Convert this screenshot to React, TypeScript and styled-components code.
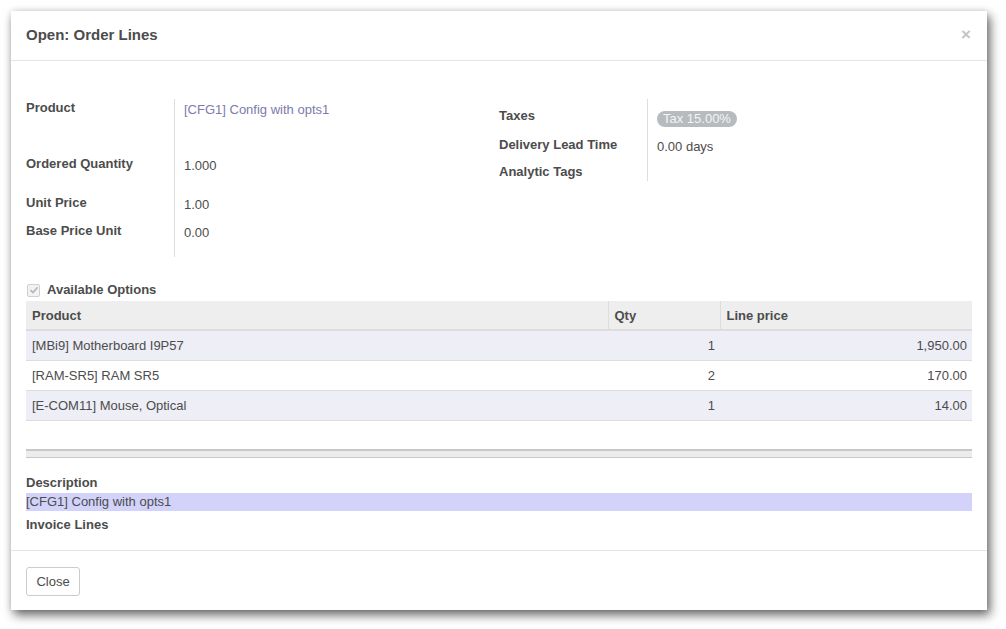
import styled, { createGlobalStyle } from "styled-components";

const GlobalStyle = createGlobalStyle`
  html, body {
    min-height: 100vh;
  }
  body {
    margin: 0;
    background: #fff;
    font-family: "Liberation Sans", Arial, sans-serif;
    font-size: 13px;
    color: #4c4c4c;
  }
`;

interface Line {
  product: string;
  qty: number;
  price: string;
}

const lines: Line[] = [
  { product: "[MBi9] Motherboard I9P57", qty: 1, price: "1,950.00" },
  { product: "[RAM-SR5] RAM SR5", qty: 2, price: "170.00" },
  { product: "[E-COM11] Mouse, Optical", qty: 1, price: "14.00" },
];

function App() {
  return (
    <>
      <GlobalStyle />
      <Dialog>
        <Header>
          <Title>Open: Order Lines</Title>
          <CloseX>×</CloseX>
        </Header>
        <Body>
          <Groups>
            <Group>
              <FieldRow $h={56}>
                <Label>Product</Label>
                <Value $pad={2}>
                  <Link>[CFG1] Config with opts1</Link>
                </Value>
              </FieldRow>
              <FieldRow $h={39}>
                <Label>Ordered Quantity</Label>
                <Value $pad={2}>1.000</Value>
              </FieldRow>
              <FieldRow $h={28}>
                <Label>Unit Price</Label>
                <Value $pad={2}>1.00</Value>
              </FieldRow>
              <FieldRow $h={35}>
                <Label>Base Price Unit</Label>
                <Value $pad={2}>0.00</Value>
              </FieldRow>
            </Group>
            <Group>
              <FieldRow $h={37}>
                <Label $pad={8}>Taxes</Label>
                <Value $pad={12}>
                  <Badge>Tax 15.00%</Badge>
                </Value>
              </FieldRow>
              <FieldRow $h={27}>
                <Label>Delivery Lead Time</Label>
                <Value $pad={2}>0.00 days</Value>
              </FieldRow>
              <FieldRow $h={18}>
                <Label>Analytic Tags</Label>
                <Value />
              </FieldRow>
            </Group>
          </Groups>

          <OptionsToggle>
            <CheckBox>
              <svg width="10" height="10" viewBox="0 0 10 10">
                <path d="M1.5 5.2 L4 7.6 L8.6 2.2" fill="none" stroke="#b5b5b5" strokeWidth="1.6" />
              </svg>
            </CheckBox>
            <span>Available Options</span>
          </OptionsToggle>

          <Table>
            <colgroup>
              <col style={{ width: 582 }} />
              <col style={{ width: 112 }} />
              <col />
            </colgroup>
            <thead>
              <tr>
                <Th>Product</Th>
                <Th>Qty</Th>
                <Th>Line price</Th>
              </tr>
            </thead>
            <tbody>
              {lines.map((l, i) => (
                <Tr key={l.product} $odd={i % 2 === 0}>
                  <Td>{l.product}</Td>
                  <Td $right>{l.qty}</Td>
                  <Td $right>{l.price}</Td>
                </Tr>
              ))}
            </tbody>
          </Table>

          <Divider />

          <BlockLabel $top={16}>Description</BlockLabel>
          <Highlight>[CFG1] Config with opts1</Highlight>
          <BlockLabel $top={5}>Invoice Lines</BlockLabel>
        </Body>
        <Footer>
          <Button>Close</Button>
        </Footer>
      </Dialog>
    </>
  );
}

const Dialog = styled.div`
  margin: 11px 0 0 11px;
  width: 976px;
  background: #fff;
  display: flex;
  flex-direction: column;
  box-shadow: 3px 5px 10px rgba(0, 0, 0, 0.6), 0 0 6px rgba(0, 0, 0, 0.1);
`;

const Header = styled.div`
  display: flex;
  align-items: center;
  justify-content: space-between;
  height: 47px;
  padding: 0 15px 2px;
  border-bottom: 1px solid #e5e5e5;
`;

const Title = styled.h4`
  margin: 0;
  font-size: 15px;
  font-weight: bold;
  color: #4c4c4c;
`;

const CloseX = styled.span`
  font-size: 17px;
  font-weight: bold;
  color: #c4c4c4;
  line-height: 1;
  margin-right: 1px;
`;

const Body = styled.div`
  padding: 38px 15px 16px;
`;

const Groups = styled.div`
  display: grid;
  grid-template-columns: 1fr 1fr;
`;

const Group = styled.div`
  display: flex;
  flex-direction: column;
`;

const FieldRow = styled.div<{ $h: number }>`
  display: grid;
  grid-template-columns: 149px 1fr;
  height: ${(p) => p.$h}px;
  line-height: 18px;
`;

const Label = styled.div<{ $pad?: number }>`
  font-weight: bold;
  padding-top: ${(p) => p.$pad ?? 0}px;
  border-right: 1px solid #ddd;
`;

const Value = styled.div<{ $pad?: number }>`
  padding: ${(p) => p.$pad ?? 0}px 0 0 9px;
`;

const Link = styled.span`
  color: #7c7bad;
`;

const Badge = styled.span`
  display: inline-block;
  height: 16px;
  line-height: 16px;
  padding: 0 6px;
  border-radius: 8px;
  background: #b8bbbe;
  color: #f4f4f4;
  vertical-align: top;
`;

const OptionsToggle = styled.div`
  display: flex;
  align-items: center;
  gap: 7px;
  margin-top: 24px;
  height: 18px;
  font-weight: bold;
  line-height: 18px;
`;

const CheckBox = styled.span`
  box-sizing: border-box;
  width: 13px;
  height: 13px;
  margin-left: 1px;
  border: 1px solid #d0d0d0;
  border-radius: 2px;
  background: #f2f2f2;
  display: flex;
  align-items: center;
  justify-content: center;
`;

const Table = styled.table`
  width: 100%;
  margin-top: 2px;
  border-collapse: collapse;
  table-layout: fixed;
`;

const Th = styled.th`
  height: 28px;
  padding: 0 6px;
  text-align: left;
  font-weight: bold;
  background: #eee;
  border-bottom: 2px solid #ddd;
  border-left: 1px solid #ddd;
  &:first-child {
    border-left: none;
  }
`;

const Tr = styled.tr<{ $odd: boolean }>`
  background: ${(p) => (p.$odd ? "#eeeef6" : "#fff")};
`;

const Td = styled.td<{ $right?: boolean }>`
  height: 29px;
  padding: 0 5px 0 6px;
  text-align: ${(p) => (p.$right ? "right" : "left")};
  border-bottom: 1px solid #ddd;
`;

const Divider = styled.div`
  margin-top: 28px;
  height: 6px;
  background: #ececec;
  border-top: 2px solid #c8c8c8;
  border-bottom: 1px solid #c8c8c8;
`;

const BlockLabel = styled.div<{ $top?: number }>`
  margin-top: ${(p) => p.$top ?? 15}px;
  font-weight: bold;
  line-height: 18px;
`;

const Highlight = styled.div`
  margin-top: 1px;
  line-height: 18px;
  background: #d2d2fb;
`;

const Footer = styled.div`
  padding: 16px 15px 14px;
  border-top: 1px solid #e5e5e5;
`;

const Button = styled.button`
  height: 29px;
  width: 54px;
  padding: 0;
  font-family: inherit;
  font-size: 13px;
  color: #4c4c4c;
  background: #fff;
  border: 1px solid #ccc;
  border-radius: 3px;
`;

export default App;
